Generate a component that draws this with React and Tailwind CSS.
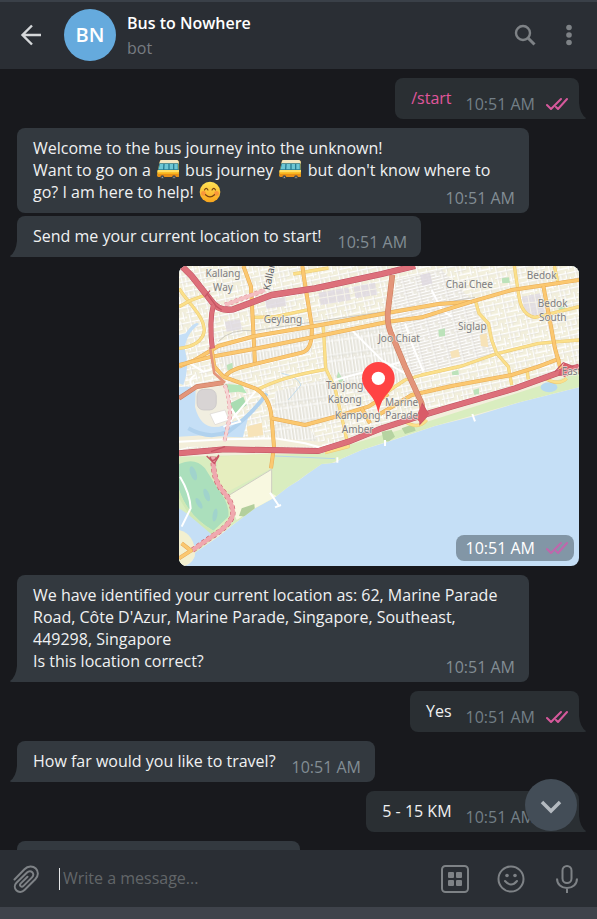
import React from "react";

const CASING = "#e6ab58";

function Road({ d, width = 10, color = "#fbc870", casing = CASING, dash }) {
  return (
    <g fill="none" strokeLinejoin="round">
      <path d={d} stroke={casing} strokeWidth={width + 3} strokeDasharray={dash} />
      <path d={d} stroke={color} strokeWidth={width} />
    </g>
  );
}

const YELLOW_ROADS = [
  "M12 85 C40 130 85 165 88 210 C85 245 50 262 12 265",
  "M12 140 L45 122 L92 105",
  "M235 172 L300 170 L405 148",
  "M355 42 L460 24",
  "M445 200 L452 325 L480 385 L500 470 L520 560 L450 578",
  "M245 390 Q320 350 452 328",
  "M630 400 L690 360 L740 345 L860 318 L962 282 L1090 250 L1212 240",
  "M902 125 L912 160 L940 190 L950 240 L965 280 L1000 320 L1010 375",
  "M1018 18 L1032 110 Q1040 165 1080 172 L1212 140",
  "M1138 18 L1150 75",
  "M1056 330 L1060 358",
  "M690 485 Q730 510 755 480",
  "M1105 352 Q1150 380 1175 355",
];

const ORANGE_ROADS = [
  "M205 18 L228 80 L240 310",
  "M382 18 L388 60 L410 195 Q415 270 380 278 L215 318 Q160 330 150 352",
  "M12 320 L60 300 L130 258 L240 228 L420 198 L640 158 L790 132 L890 125 L1010 90 L1212 60",
  "M12 315 L110 290 L240 266 L420 230 L640 185 L740 172 L890 125",
  "M110 270 L118 320 L145 350 L240 385 Q285 410 290 475 L297 560 L288 625",
  "M290 475 L390 495 L500 465 L580 440 L640 402",
  "M615 462 L710 405 L830 378 L1010 345 L1090 320 L1155 295",
  "M1105 78 L1128 200 L1140 265 L1158 330",
  "M560 445 L585 490",
];

const LABELS = [
  ["Kallang", 144, 50],
  ["Way", 144, 92],
  ["Geylang", 324, 189],
  ["Chai Chee", 883, 83],
  ["Bedok", 1100, 58],
  ["Bedok", 1133, 142],
  ["South", 1133, 184],
  ["Siglap", 892, 210],
  ["Joo Chiat", 672, 247],
  ["Tanjong", 509, 388],
  ["Katong", 509, 429],
  ["Marine", 680, 438],
  ["Kampong", 548, 477],
  ["Parade", 680, 478],
  ["Amber", 548, 518],
];

function LocationMap() {
  const coast =
    "M12 18 H1212 V382 L1100 410 L1040 425 L900 468 L780 498 L700 525 L630 548 L560 570 L500 596 L480 608 L440 612 L400 640 L370 662 L340 680 L300 712 L240 745 L180 790 L130 830 L60 878 Q60 905 30 918 H12 Z";
  return (
    <svg viewBox="12 18 1200 900" className="block w-full" role="img" aria-label="Map of Marine Parade, Singapore">
      <defs>
        <pattern id="streetsA" width="58" height="46" patternUnits="userSpaceOnUse" patternTransform="rotate(-12)">
          <path d="M0 8H58M0 24H36M12 38H58M8 0V46M20 8V38M36 0V24M48 20V46" stroke="#fff" strokeWidth="4" fill="none" />
          <path d="M0 11H58M11 0V46M39 0V24M51 20V46M23 8V38M0 27H36" stroke="#d3d0c8" strokeWidth="1" fill="none" />
        </pattern>
        <pattern id="streetsB" width="40" height="36" patternUnits="userSpaceOnUse" patternTransform="rotate(-14)">
          <path d="M0 5H40M0 14H28M8 23H40M6 0V36M28 5V23M0 32H40" stroke="#fff" strokeWidth="3.5" fill="none" />
          <path d="M0 8H40M0 17H28M8 26H40M9 0V36M0 35H40" stroke="#cfccc5" strokeWidth="1.2" fill="none" />
        </pattern>
        <pattern id="streetsC" width="30" height="60" patternUnits="userSpaceOnUse" patternTransform="rotate(-8)">
          <path d="M4 0V60M14 0V46M24 12V60M0 6H30M0 48H30" stroke="#fff" strokeWidth="3.5" fill="none" />
          <path d="M7 0V60M17 0V46M27 12V60M0 51H30" stroke="#cfccc5" strokeWidth="1.2" fill="none" />
        </pattern>
        <clipPath id="land">
          <path d={coast} />
        </clipPath>
      </defs>

      <rect x="12" y="18" width="1200" height="900" fill="#c5dff6" />
      <path d={coast} fill="#f2efdc" />
      <g clipPath="url(#land)">
        <path d="M12 18H1212V330L740 470L440 570L12 580Z" fill="url(#streetsA)" />
        <path d="M650 150L900 130L960 280L740 345L690 340Z" fill="#eceae1" />
        <path d="M650 150L900 130L960 280L740 345L690 340Z" fill="url(#streetsB)" />
        <path d="M120 265L410 210V275L150 325Z" fill="#eceae1" />
        <path d="M120 265L410 210V275L150 325Z" fill="url(#streetsC)" />
        <path d="M300 395L480 350L500 465L395 490L440 565L300 560Z" fill="#eceae1" />
        <path d="M300 395L480 350L500 465L395 490L440 565L300 560Z" fill="url(#streetsC)" />
        <path d="M452 215L630 190L690 350L630 400L540 400L455 325Z" fill="#eceae1" />
        <path d="M452 215L630 190L690 350L630 400L540 400L455 325Z" fill="url(#streetsC)" />
        <path d="M665 60L800 30L860 90L890 120L650 150Z" fill="#eceae1" />
        <path d="M665 60L800 30L860 90L890 120L650 150Z" fill="url(#streetsB)" />

        <g fill="#dfd9e1" opacity=".8">
          <path d="M430 98L520 82L528 120L438 135Z" />
          <path d="M535 80L600 68L606 104L542 115Z" />
          <path d="M1040 110L1095 100L1112 165L1052 168Z" />
          <path d="M270 120L330 112L333 138L275 146Z" />
          <path d="M150 185L195 178L200 208L155 215Z" />
          <path d="M735 45L765 38L772 70L742 78Z" />
        </g>
        <g stroke="#f6f3ea" strokeWidth="3" fill="none">
          <path d="M455 90L462 134M480 86L487 130M505 82L512 126M432 115L606 86M555 74L562 112M580 70L587 108" />
          <path d="M1058 104L1070 170M1078 102L1090 170M1042 130L1106 124" />
        </g>
        <g fill="#f7e3b8">
          <path d="M915 225L935 220L940 262L918 258Z" />
          <path d="M215 500L260 488L265 525L220 532Z" />
          <path d="M825 275L850 268L855 290L830 295Z" />
        </g>
        <g fill="#bce2ba">
          <path d="M490 335L505 360L495 372L485 350Z" />
          <path d="M155 315L172 308L174 328L158 332Z" />
          <path d="M830 335L850 330L852 344L832 346Z" />
          <path d="M895 390L912 385V402L898 405Z" />
          <path d="M790 210L810 205V228L792 230Z" />
          <path d="M1150 140L1170 138V152H1152Z" />
          <path d="M980 55L1002 52L1005 68L982 70Z" />
        </g>

        <path d="M12 380H60Q70 480 130 500L220 470L200 545L12 545Z" fill="#c5dff6" />
        <path d="M62 395Q110 365 150 385L175 440L150 495Q80 520 60 440Z" fill="#f1eee0" />
        <rect x="66" y="388" width="58" height="62" rx="20" fill="#d8d4d4" stroke="#c6c3c4" strokeWidth="2" />
        <path d="M105 462L150 450L162 480L120 494Z" fill="#fff" stroke="#d9d5d2" strokeWidth="2" />
        <path d="M12 225L32 220Q60 180 72 192Q30 225 30 270Q45 320 25 375L12 370Z" fill="#c5dff6" />
        <path d="M165 430L205 410L215 435L180 460Z" fill="#a9dcb2" />
        <path d="M150 372L200 375L215 400L190 395L160 398Z" fill="#b5e6b8" />
        <path d="M12 530L100 525L150 530L290 535L440 545V560H12Z" fill="#f3eeda" />
        <path d="M40 505Q100 540 160 515Q235 460 275 400" stroke="#b1d2ee" strokeWidth="12" fill="none" />
        <path d="M320 340Q370 350 378 375L340 420" stroke="#c4dcec" strokeWidth="3" fill="none" />

        <path d="M12 590L440 580L520 555L735 492L1155 358L1212 332V382L1040 425L780 498L560 570L400 640L300 712L180 790L60 878L12 918Z" fill="#d9edbf" />
        <path d="M130 590L290 580V625L150 700L122 660Z" fill="#e6eebf" />
        <path d="M290 628V700L310 712L240 745L185 780L155 710Z" fill="#f8f8e0" />
        <path d="M12 612Q60 590 90 625L125 680Q165 730 160 770L115 812Q40 770 12 690Z" fill="#abdfbc" />
        <g fill="#a0d3cc">
          <ellipse cx="55" cy="640" rx="9" ry="22" transform="rotate(-20 55 640)" />
          <ellipse cx="95" cy="705" rx="8" ry="20" transform="rotate(-20 95 705)" />
          <ellipse cx="72" cy="730" rx="7" ry="18" transform="rotate(-30 72 730)" />
          <ellipse cx="120" cy="765" rx="7" ry="20" transform="rotate(10 120 765)" />
        </g>
        <path d="M12 745L50 770L120 830L60 872L12 820Z" fill="#c5dff6" />
        <path d="M12 690Q40 770 115 812L150 802L120 832L45 768L12 715Z" fill="#cfe8b5" />
        <path d="M12 810Q60 820 62 890L30 918H12Z" fill="#f3f0d0" />
        <path d="M200 745L238 732L240 752L215 770L192 768Z" fill="#b3cf9c" />
        <path d="M620 515L650 510L660 530L640 545L625 540ZM680 505L715 492L722 512L690 522Z" fill="#b6d3a1" />
        <ellipse cx="1122" cy="382" rx="25" ry="15" fill="#b6d9f0" />
        <path d="M300 588L480 596" stroke="#b8d6e8" strokeWidth="3" fill="none" />
        <path d="M155 710L290 628V700" stroke="#cfcdc2" strokeWidth="3" fill="none" />
      </g>

      <path d="M130 245Q165 205 240 212L420 185L720 142L900 112" stroke="#b9b8b3" strokeWidth="2" fill="none" />
      <g stroke="#fff" strokeWidth="6" fill="none">
        <path d="M12 545L150 538L300 535L390 550L445 565" />
        <path d="M45 310L85 335L118 325M60 345Q35 360 55 385" />
        <path d="M160 490L245 390M165 440L195 485L145 500" />
        <path d="M690 190L712 255L745 335M770 90L800 150L830 170" />
        <path d="M480 360L700 300M530 210L620 300L690 340" />
        <path d="M15 650Q45 700 47 745L20 800" />
        <path d="M285 698L312 738M300 742L318 735" />
        <path d="M630 540V558M892 462L900 484M487 592V608" />
      </g>

      {YELLOW_ROADS.map((d) => (
        <Road key={d} d={d} width={7} color="#fbe08a" casing="#ecca78" />
      ))}
      {ORANGE_ROADS.map((d) => (
        <Road key={d} d={d} width={9} />
      ))}

      <Road d="M652 45L638 160Q636 200 655 235L690 320L740 430L745 470" width={14} color="#e3957a" casing="#c97a5c" />
      <Road d="M12 415L65 380L145 368" width={11} color="#e3957a" casing="#c97a5c" />
      <path d="M105 262L118 340L150 368" stroke="#e3957a" strokeWidth="8" fill="none" />

      <Road d="M150 375Q165 420 165 470L148 545" width={9} color="#f7d3d3" casing="#de8791" dash="9 7" />
      <Road d="M150 135L270 90" width={11} color="#f4bfc2" casing="#e38f98" dash="9 7" />
      <Road d="M115 590Q112 660 145 695Q180 735 172 770Q160 800 110 830L50 872" width={13} color="#f0a8ae" casing="#cc5f6c" dash="10 8" />
      <Road d="M12 895L48 872L20 850" width={9} />
      <Road d="M12 580L150 568L430 573L520 545L620 505L745 465L830 440L1020 385L1160 335L1212 320" width={15} color="#dd707a" casing="#be5263" />
      <Road d="M20 18L50 48L108 122Q130 155 175 148L290 105L420 85L620 42L720 18" width={16} color="#dd707a" casing="#be5263" />
      <Road d="M115 135Q102 185 112 265" width={12} color="#dd707a" casing="#be5263" />
      <g stroke="#c65564" strokeWidth="4" fill="none">
        <path d="M105 590Q110 615 132 585M108 575L150 560M95 588L118 610L132 588" />
        <path d="M95 100L125 140L140 150M90 110L105 92" />
        <path d="M730 475L742 432L760 462M735 480V492L755 470" />
        <path d="M1140 335L1165 308L1195 320M1150 345L1180 345" />
      </g>
      <path d="M740 432L762 462L738 490L722 475Z" fill="#d95c68" />
      <path d="M1150 340L1168 308L1190 322L1170 352Z" fill="#d95c68" />

      <g
        className="font-['Noto_Sans','Open_Sans',sans-serif]"
        fontSize="30"
        fill="#7d7d80"
        stroke="#f6f4ea"
        strokeWidth="4"
        strokeOpacity=".8"
        paintOrder="stroke"
        textAnchor="middle"
      >
        {LABELS.map(([name, x, y]) => (
          <text key={name + x + y} x={x} y={y}>
            {name}
          </text>
        ))}
        <text x="1160" y="346" textAnchor="start">East</text>
        <text transform="translate(284 92) rotate(-78)" textAnchor="start" fill="#5d5d63">Kallang</text>
      </g>

      <path
        d="M610 460C603 425 592 412 577 394C566 380 561 370 561 355A49 49 0 0 1 659 355C659 370 654 380 643 394C628 412 617 425 610 460Z"
        fill="#ff4343"
      />
      <circle cx="610" cy="355" r="20" fill="#fff" />
    </svg>
  );
}

function BusEmoji() {
  return (
    <svg viewBox="0 0 66 62" className="mx-[2px] inline-block h-[22px] w-[22px] align-[-5px]" role="img" aria-label="bus">
      <circle cx="16" cy="53" r="8" fill="#343536" />
      <circle cx="51" cy="53" r="8" fill="#343536" />
      <path d="M9 4Q10 1 14 1H59Q64 1 65 6L66 48Q66 52 62 52H5Q1 52 1 47V38Z" fill="#f9b51c" />
      <path d="M9 4Q10 1 14 1H59Q64 1 65 6V12H7Z" fill="#f3e6c0" />
      <path d="M2 31H66V38H1Z" fill="#ffdf64" />
      <path d="M7 11H64L65 31H3Z" fill="#287b91" />
      <path d="M9 13H19L18 29H5ZM23 13H34V29H22ZM38 13H48V29H38ZM52 13H62V29H52Z" fill="#6dc6d4" />
      <path d="M1 43H66V48Q66 52 62 52H5Q1 52 1 47Z" fill="#e88f16" />
      <circle cx="16" cy="53" r="6" fill="#45484b" />
      <circle cx="51" cy="53" r="6" fill="#45484b" />
      <circle cx="16" cy="53" r="2" fill="#b5b8ba" />
      <circle cx="51" cy="53" r="2" fill="#b5b8ba" />
    </svg>
  );
}

function SmileEmoji() {
  return (
    <svg viewBox="0 0 64 64" className="mx-px inline-block h-[22px] w-[22px] align-[-5px]" role="img" aria-label="smiling face">
      <defs>
        <linearGradient id="face" x1="0" y1="0" x2="0" y2="1">
          <stop offset="0" stopColor="#ffe254" />
          <stop offset="1" stopColor="#f8a51d" />
        </linearGradient>
      </defs>
      <circle cx="32" cy="32" r="30" fill="url(#face)" />
      <circle cx="13" cy="36" r="7" fill="#f8803c" opacity=".65" />
      <circle cx="51" cy="36" r="7" fill="#f8803c" opacity=".65" />
      <path d="M16 26Q21 17 26 26M38 26Q43 17 48 26M19 40Q32 53 45 40" fill="none" stroke="#794313" strokeWidth="3.5" strokeLinecap="round" />
    </svg>
  );
}

function Checks({ color = "#d6599c" }) {
  return (
    <svg viewBox="0 0 22 14" className="h-[14px] w-[22px]" fill="none" stroke={color} strokeWidth="2" role="img" aria-label="Read">
      <path d="M1 8L5 12L15 2M10 10L12 12L21 2" strokeLinecap="round" strokeLinejoin="round" />
    </svg>
  );
}

function Tail({ side }) {
  return side === "in" ? (
    <svg viewBox="0 0 8 16" className="absolute right-full bottom-0 h-4 w-2" fill="#33393f" aria-hidden="true">
      <path d="M8 0Q7 11 1 15Q1 16 3 16H8Z" />
    </svg>
  ) : (
    <svg viewBox="0 0 8 16" className="absolute bottom-0 left-full h-4 w-2" fill="#2a2f33" aria-hidden="true">
      <path d="M0 0Q1 11 7 15Q7 16 5 16H0Z" />
    </svg>
  );
}

function Incoming({ children, tail = true }) {
  return (
    <article
      className={`relative w-fit max-w-[512px] rounded-lg bg-[#33393f] pt-[9px] pr-[14px] pb-[10px] pl-4 ${tail ? "rounded-bl-none" : ""}`}
    >
      {children}
      <time className="float-right mt-[6px] -mb-[6px] ml-4 text-[#828d94]">10:51 AM</time>
      {tail && <Tail side="in" />}
    </article>
  );
}

function Outgoing({ children }) {
  return (
    <article className="relative ml-auto flex w-fit rounded-lg rounded-br-none bg-[#2a2f33] pt-[9px] pr-[11px] pb-[10px] pl-4">
      <span>{children}</span>
      <span className="mt-[6px] -mb-[6px] ml-[14px] flex items-center gap-[11px] text-[#737f87]">
        <time>10:51 AM</time>
        <Checks />
      </span>
      <Tail side="out" />
    </article>
  );
}

function Header() {
  return (
    <header className="flex h-[69px] shrink-0 items-center border-t-2 border-[#3a4048] bg-[#2a2e34] pr-[17px] pb-[2px] pl-5">
      <button type="button" aria-label="Back" className="text-[#d5d7d9]">
        <svg viewBox="0 0 22 22" className="h-[22px] w-[22px]" fill="none" stroke="currentColor" strokeWidth="2.4">
          <path d="M21 11H3M12 1.5L2.5 11L12 20.5" />
        </svg>
      </button>
      <div className="ml-[22px] flex h-[52px] w-[52px] items-center justify-center rounded-full bg-[#65aadd] text-xl font-semibold text-white">
        BN
      </div>
      <div className="ml-[11px] flex-1 pt-[2px] leading-[25px]">
        <h1 className="font-semibold text-white">Bus to Nowhere</h1>
        <p className="text-[#777c82]">bot</p>
      </div>
      <button type="button" aria-label="Search" className="text-[#7e8286]">
        <svg viewBox="0 0 22 22" className="h-[22px] w-[22px]" fill="none" stroke="currentColor" strokeWidth="2.4">
          <circle cx="9" cy="9" r="7" />
          <path d="M14 14L20.5 20.5" strokeWidth="3" />
        </svg>
      </button>
      <button type="button" aria-label="More" className="ml-[22px] text-[#7e8286]">
        <svg viewBox="0 0 22 22" className="h-[22px] w-[22px]" fill="currentColor">
          <circle cx="11" cy="3.5" r="2.8" />
          <circle cx="11" cy="11" r="2.8" />
          <circle cx="11" cy="18.5" r="2.8" />
        </svg>
      </button>
    </header>
  );
}

function Composer() {
  return (
    <form className="flex h-[69px] shrink-0 items-center border-b-12 border-[#3f434b] bg-[#2a2e34] pr-4 pl-3 text-[#7e8286]">
      <button type="button" aria-label="Attach a file">
        <svg viewBox="0 0 28 28" className="h-7 w-7" fill="none" stroke="currentColor" strokeWidth="2" strokeLinecap="round">
          <path d="M2.5 14.5L12.5 4.2C16 .6 21 .8 23.8 3.5C26.6 6.3 26.6 11 23.3 14.3L12.5 25C10 27.5 6.500 27.500 4.500 25.500C2.200 23.200 2.300 20 4.500 17.800L15 7.500C16.800 5.700 19 5.900 20.300 7.200C21.700 8.600 21.700 10.700 20 12.400L11.500 20.900C10.500 21.900 9.300 21.800 8.600 21.100C7.900 20.400 7.900 19.300 8.800 18.400L15.500 11.700" />
        </svg>
      </button>
      <span className="ml-[19px] h-[22px] w-px bg-[#e6e7e8]" aria-hidden="true" />
      <input
        type="text"
        aria-label="Message"
        placeholder="Write a message..."
        className="ml-[3px] min-w-0 flex-1 bg-transparent pb-[2px] text-[#f5f5f5] outline-none placeholder:text-[#626669]"
      />
      <button type="button" aria-label="Bot keyboard">
        <svg viewBox="0 0 28 28" className="h-7 w-7" fill="none" stroke="currentColor" strokeWidth="2">
          <rect x="1" y="1" width="26" height="26" rx="3.500" />
          <g fill="currentColor" stroke="none">
            <rect x="7" y="7" width="6" height="6" rx="1" />
            <rect x="15" y="7" width="6" height="6" rx="1" />
            <rect x="7" y="15" width="6" height="6" rx="1" />
            <rect x="15" y="15" width="6" height="6" rx="1" />
          </g>
        </svg>
      </button>
      <button type="button" aria-label="Emoji" className="ml-7">
        <svg viewBox="0 0 28 28" className="h-7 w-7" fill="none" stroke="currentColor" strokeWidth="2">
          <circle cx="14" cy="14" r="12.500" />
          <path d="M8 16Q14 23 20 16" strokeLinecap="round" />
          <circle cx="10" cy="10.500" r="1.800" fill="currentColor" stroke="none" />
          <circle cx="18" cy="10.500" r="1.800" fill="currentColor" stroke="none" />
        </svg>
      </button>
      <button type="button" aria-label="Record voice message" className="ml-7">
        <svg viewBox="0 0 28 28" className="h-7 w-7" fill="none" stroke="currentColor" strokeWidth="2">
          <rect x="9.500" y="1" width="9" height="17" rx="4.500" />
          <path d="M4 13.500C4 19.500 8.500 23 14 23C19.500 23 24 19.500 24 13.500M14 23V28" />
        </svg>
      </button>
    </form>
  );
}

export default function App() {
  return (
    <div className="flex h-screen flex-col bg-[#18191d] font-['Open_Sans','Noto_Sans',sans-serif] text-base/[22px] text-[#f0f1f2]">
      <Header />
      <div className="relative min-h-0 flex-1">
        <main className="flex h-full flex-col gap-[9px] overflow-y-auto pt-[9px] pr-[18px] pl-[17px] [scrollbar-width:none] *:shrink-0">
          <Outgoing>
            <a href="#start" className="text-[#e0569c]">/start</a>
          </Outgoing>
          <div className="flex flex-col gap-[3px]">
            <Incoming tail={false}>
              Welcome to the bus journey into the unknown!
              <br />
              Want to go on a <BusEmoji /> bus journey <BusEmoji /> but don't know where to go? I am here to help! <SmileEmoji />
            </Incoming>
            <Incoming>Send me your current location to start!</Incoming>
          </div>
          <figure className="relative ml-auto w-full max-w-[400px] overflow-hidden rounded-lg">
            <LocationMap />
            <figcaption className="absolute right-[5px] bottom-[5px] flex h-[26px] items-center gap-[11px] rounded-lg bg-[#8296a6] pr-[6px] pl-[10px] text-white">
              <time>10:51 AM</time>
              <Checks color="#c066ac" />
            </figcaption>
          </figure>
          <Incoming>
            We have identified your current location as: 62, Marine Parade Road, Côte D'Azur, Marine Parade, Singapore,
            Southeast, 449298, Singapore
            <br />
            Is this location correct?
          </Incoming>
          <Outgoing>Yes</Outgoing>
          <Incoming>How far would you like to travel?</Incoming>
          <Outgoing>5 - 15 KM</Outgoing>
          <article className="h-10 w-full max-w-[283px] rounded-lg bg-[#33393f]" aria-busy="true" />
        </main>
        <button
          type="button"
          aria-label="Scroll to latest message"
          className="absolute right-5 bottom-[19px] flex h-[52px] w-[52px] items-center justify-center rounded-full bg-[#434d57] text-[#b4bac0]"
        >
          <svg viewBox="0 0 22 14" className="mt-1 h-[14px] w-[22px]" fill="none" stroke="currentColor" strokeWidth="3.500">
            <path d="M2 2L11 11L20 2" />
          </svg>
        </button>
      </div>
      <Composer />
    </div>
  );
}
